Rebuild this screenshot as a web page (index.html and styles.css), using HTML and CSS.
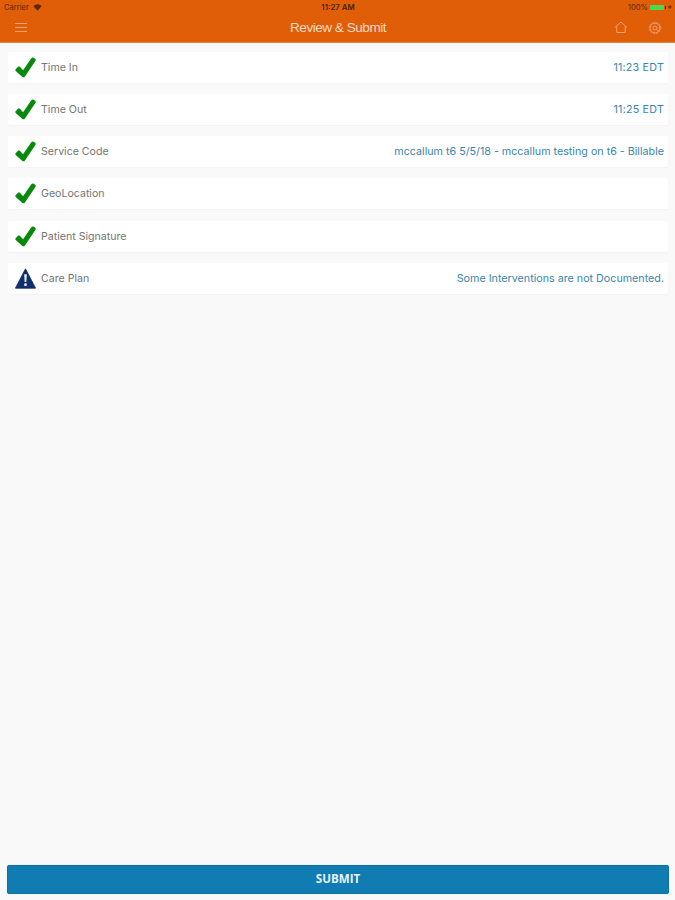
FILE: index.html
```html
<!DOCTYPE html>
<html lang="en">
<head>
    <meta charset="UTF-8">
    <meta name="viewport" content="width=device-width, initial-scale=1.0">
    <title>Review &amp; Submit</title>
    <link rel="stylesheet" href="styles.css">
</head>
<body>
    <svg width="0" height="0" class="symbols">
        <symbol id="check" viewBox="0 0 20 20">
            <path d="M0.6 11.6L2.9 9.2Q3.8 8.5 4.6 9.3L7.7 12.5L15.5 1.2Q16.6 -0.1 17.9 0.8L19.2 1.7Q20.2 2.6 19.4 3.9L9.5 18.5Q8.2 20.1 6.8 18.7L0.7 13.3Q-0.1 12.4 0.6 11.6Z" fill="#078a0c"/>
        </symbol>
    </svg>

    <header>
        <div class="status-bar">
            <div class="carrier">
                <span>Carrier</span>
                <svg width="9" height="7" viewBox="0 0 9 7"><path d="M0.3 2Q4.5 -1.5 8.7 2L4.5 6.8Z" fill="#5a2a0a"/></svg>
            </div>
            <div class="clock">11:27 AM</div>
            <div class="battery">
                <span>100%</span>
                <span class="battery-level"></span>
                <span class="battery-tip"></span>
                <svg width="4" height="6" viewBox="0 0 4 6"><path d="M0 3H3.5M2 1.2V4.8" stroke="#5a2a0a" fill="none"/></svg>
            </div>
        </div>
        <div class="nav-bar">
            <div class="nav-left">
                <svg width="12" height="9" viewBox="0 0 12 9"><path d="M0 0.5H12M0 4.5H12M0 8.5H12" stroke="#f0a070"/></svg>
            </div>
            <h1>Review &amp; Submit</h1>
            <div class="nav-right">
                <svg width="14" height="13" viewBox="0 0 14 13"><path d="M1 6.5L7 1L13 6.5M2.8 5.5V11.5H11.2V5.5" fill="none" stroke="#f0a070"/></svg>
                <svg width="14" height="14" viewBox="0 0 14 14" fill="none" stroke="#f0a070">
                    <circle cx="7" cy="7" r="4.9"/>
                    <circle cx="7" cy="7" r="5.8" stroke-width="1" stroke-dasharray="1.5 1.54"/>
                    <circle cx="7" cy="7" r="2"/>
                    <path d="M8.4 8.4L10.4 10.4"/>
                </svg>
            </div>
        </div>
    </header>

    <main>
        <div class="item">
            <svg class="icon"><use href="#check"/></svg>
            <span class="label">Time In</span>
            <span class="value time">11:23 EDT</span>
        </div>
        <div class="item">
            <svg class="icon"><use href="#check"/></svg>
            <span class="label">Time Out</span>
            <span class="value time">11:25 EDT</span>
        </div>
        <div class="item">
            <svg class="icon"><use href="#check"/></svg>
            <span class="label">Service Code</span>
            <span class="value">mccallum t6 5/5/18 - mccallum testing on t6 - Billable</span>
        </div>
        <div class="item">
            <svg class="icon"><use href="#check"/></svg>
            <span class="label">GeoLocation</span>
        </div>
        <div class="item">
            <svg class="icon"><use href="#check"/></svg>
            <span class="label">Patient Signature</span>
        </div>
        <div class="item">
            <svg class="icon" viewBox="0 0 20 20">
                <path d="M10 0.8L19.6 19.2H0.4Z" fill="#0e2f68" stroke="#0e2f68" stroke-width="0.8" stroke-linejoin="round"/>
                <path d="M8.7 6H11.3L10.8 13.3H9.2Z" fill="#dfe8f2"/>
                <circle cx="10" cy="16" r="1.4" fill="#dfe8f2"/>
            </svg>
            <span class="label">Care Plan</span>
            <span class="value">Some Interventions are not Documented.</span>
        </div>
    </main>

    <footer>
        <button class="submit-button">SUBMIT</button>
    </footer>
</body>
</html>
```

FILE: styles.css
```css
body {
    font-family: Inter, "Liberation Sans", sans-serif;
    background-color: #f9f9f9;
    margin: 0;
    height: 100vh;
    display: flex;
    flex-direction: column;
}

svg {
    display: block;
    flex: none;
}

.symbols {
    height: 0;
}

header {
    height: 42px;
    background-color: #e05e08;
    border-bottom: 1px solid #e8853f;
    box-sizing: content-box;
}

.status-bar {
    display: grid;
    grid-template-columns: 1fr auto 1fr;
    align-items: center;
    height: 14px;
    padding: 0 3px 0 4px;
    font-size: 7.6px;
    color: #5a2a0a;
}

.carrier {
    display: flex;
    align-items: center;
    gap: 4px;
}

.clock {
    font-weight: 600;
    font-size: 7.8px;
    color: #4a220a;
}

.battery {
    display: flex;
    align-items: center;
    justify-content: flex-end;
    gap: 1px;
}

.battery-level {
    width: 14px;
    height: 5px;
    margin-left: 1px;
    border-radius: 1px;
    background-color: #4cd950;
}

.battery-tip {
    width: 1px;
    height: 3px;
    margin-right: 1px;
    background-color: #5a2a0a;
}

.nav-bar {
    display: grid;
    grid-template-columns: 1fr auto 1fr;
    align-items: center;
    height: 27px;
    padding: 0 13px 0 15px;
}

.nav-right {
    display: flex;
    align-items: center;
    justify-content: flex-end;
    gap: 20px;
}

h1 {
    margin: 0 1px 0 0;
    font-family: "Liberation Sans", Arial, sans-serif;
    font-size: 13.6px;
    font-weight: normal;
    letter-spacing: -0.5px;
    color: #fbd9c2;
}

main {
    flex: 1;
    display: flex;
    flex-direction: column;
    gap: 11.15px;
    padding: 9px 7px 0 8px;
}

.item {
    display: flex;
    align-items: center;
    height: 31px;
    padding: 0 4px 0 7px;
    background-color: #fff;
    border-radius: 2px;
    box-shadow: 0 1px 1px #f3f3f3;
    font-size: 10.6px;
}

.icon {
    width: 21px;
    height: 21px;
    margin-right: 5px;
}

.label {
    color: #747474;
}

.value {
    margin-left: auto;
    font-size: 10.73px;
    color: #3a86ab;
}

.time {
    letter-spacing: 0.2px;
}

footer {
    padding: 0 6px 6px 7px;
}

.submit-button {
    display: block;
    width: 100%;
    height: 29px;
    padding: 0 0 2px;
    border: 1px solid #0b72a6;
    border-radius: 2px;
    background-color: #107cb1;
    box-shadow: 0 0 1px #9fd0e6;
    color: #e6f3fa;
    font-family: "Open Sans", sans-serif;
    font-size: 11.6px;
    font-weight: bold;
}
```
